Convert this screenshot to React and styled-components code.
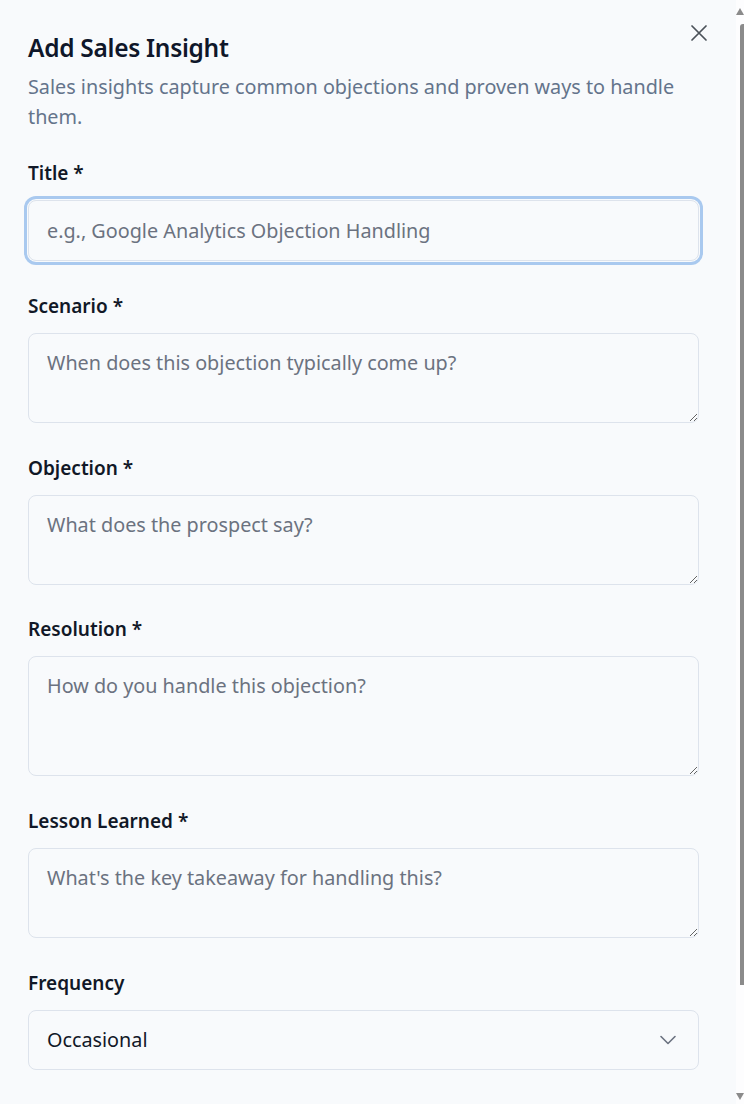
import React from "react";
import styled, { createGlobalStyle } from "styled-components";

const GlobalStyle = createGlobalStyle`
  html, body {
    margin: 0;
    padding: 0;
    background: #f8fafc;
    font-family: "Noto Sans", "Open Sans", sans-serif;
    color: #111827;
  }
  * {
    box-sizing: border-box;
  }
`;

const Dialog = styled.div`
  position: relative;
  width: 699px;
  padding: 31px 0 30px 28px;
`;

const Header = styled.div`
  display: flex;
  flex-direction: column;
  gap: 7px;
  margin-bottom: 27px;
`;

const Heading = styled.h2`
  margin: 0;
  font-size: 24.5px;
  line-height: 34px;
  font-weight: 600;
  letter-spacing: -0.3px;
  color: #0f172a;
`;

const Lead = styled.p`
  margin: 0;
  font-size: 19.8px;
  line-height: 30px;
  color: #64748b;
`;

const CloseButton = styled.button`
  position: absolute;
  top: 19px;
  right: -14px;
  width: 28px;
  height: 28px;
  padding: 0;
  border: none;
  background: none;
  color: #4b5259;
  cursor: pointer;
  display: flex;
  align-items: center;
  justify-content: center;
`;

const Form = styled.form`
  display: flex;
  flex-direction: column;
  gap: 30.8px;
`;

const Field = styled.div`
  display: flex;
  flex-direction: column;
  gap: 13px;
`;

const Label = styled.label`
  font-size: 19px;
  line-height: 28px;
  font-weight: 600;
  color: #111827;
`;

const boxStyles = `
  width: 100%;
  border: 1px solid #dde3ec;
  border-radius: 8px;
  background: #f8fafc;
  font-family: "Noto Sans", "Open Sans", sans-serif;
  font-size: 19.8px;
  color: #111827;
  padding: 0 18px;
  outline: none;
  &::placeholder {
    color: #6b7280;
  }
`;

const Input = styled.input`
  ${boxStyles}
  height: 61px;
  box-shadow: ${(p) => (p.$focused ? "0 0 0 1px #f8fafc, 0 0 0 4px #a9c9ef" : "none")};
`;

const TextArea = styled.textarea`
  ${boxStyles}
  display: block;
  height: ${(p) => p.$rows * 30 + 30}px;
  padding-top: 14px;
  line-height: 30px;
  resize: vertical;
`;

const SelectBox = styled.div`
  ${boxStyles}
  height: 60px;
  display: flex;
  align-items: center;
  justify-content: space-between;
  padding-right: 16px;
`;

const Chevron = styled.svg`
  color: #6b7280;
`;

/* window scrollbar as it appears in the screenshot */
const ScrollRail = styled.div`
  position: fixed;
  top: 0;
  right: 0;
  width: 8px;
  height: 100vh;
  background: #fdfdfe;
  display: flex;
  flex-direction: column;
  align-items: flex-end;
  padding: 8px 0 4px;
`;

const ScrollThumb = styled.div`
  width: 4px;
  height: 961px;
  margin-top: 9px;
  background: #8b8b8b;
  border-radius: 3px 0 0 0;
`;

const Spacer = styled.div`
  flex: 1;
`;

const fields = [
  { label: "Scenario *", placeholder: "When does this objection typically come up?", rows: 2 },
  { label: "Objection *", placeholder: "What does the prospect say?", rows: 2 },
  { label: "Resolution *", placeholder: "How do you handle this objection?", rows: 3 },
  { label: "Lesson Learned *", placeholder: "What's the key takeaway for handling this?", rows: 2 },
];

export default function App() {
  return (
    <>
      <GlobalStyle />
      <Dialog>
        <CloseButton aria-label="Close">
          <svg width="28" height="28" viewBox="0 0 24 24" fill="none" stroke="currentColor" strokeWidth="1.5" strokeLinecap="round">
            <path d="M18 6 6 18M6 6l12 12" />
          </svg>
        </CloseButton>
        <Header>
          <Heading>Add Sales Insight</Heading>
          <Lead>Sales insights capture common objections and proven ways to handle them.</Lead>
        </Header>
        <Form onSubmit={(e) => e.preventDefault()}>
          <Field>
            <Label>Title *</Label>
            <Input $focused placeholder="e.g., Google Analytics Objection Handling" />
          </Field>
          {fields.map((f) => (
            <Field key={f.label}>
              <Label>{f.label}</Label>
              <TextArea $rows={f.rows} placeholder={f.placeholder} />
            </Field>
          ))}
          <Field>
            <Label>Frequency</Label>
            <SelectBox>
              <span>Occasional</span>
              <Chevron width="28" height="28" viewBox="0 0 24 24" fill="none" stroke="currentColor" strokeWidth="1.4" strokeLinecap="round" strokeLinejoin="round">
                <path d="m6 9 6 6 6-6" />
              </Chevron>
            </SelectBox>
          </Field>
        </Form>
      </Dialog>
      <ScrollRail aria-hidden="true">
        <svg width="8" height="7" viewBox="0 0 8 7">
          <path d="M4 0 8 7H0Z" fill="#8b8b8b" />
        </svg>
        <ScrollThumb />
        <Spacer />
        <svg width="8" height="7" viewBox="0 0 8 7">
          <path d="M0 0h8L4 7Z" fill="#8b8b8b" />
        </svg>
      </ScrollRail>
    </>
  );
}
